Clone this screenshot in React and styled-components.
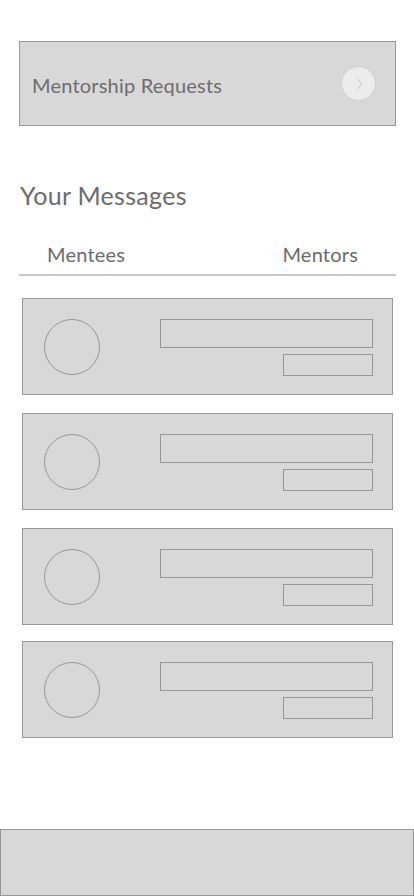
import React from "react";
import styled, { createGlobalStyle } from "styled-components";

const Global = createGlobalStyle`
  html, body { margin: 0; padding: 0; background: #ffffff; }
  body { font-family: Lato, "Noto Sans", "Liberation Sans", sans-serif; }
  * { box-sizing: border-box; }
`;

const Page = styled.div`
  min-height: 896px;
  display: flex;
  flex-direction: column;
`;

const Content = styled.main`
  padding: 41px 18px 0 19px;
  display: flex;
  flex-direction: column;
`;

const RequestCard = styled.div`
  height: 85px;
  background: #d8d8d8;
  border: 1px solid #979797;
  display: flex;
  align-items: center;
  justify-content: space-between;
  padding: 0 19px 0 12px;
`;

const RequestLabel = styled.span`
  font-size: 20px;
  color: #6d6d6d;
  letter-spacing: 0.2px;
  padding-top: 2px;
`;

const ArrowButton = styled.div`
  width: 35px;
  height: 35px;
  border-radius: 50%;
  background: #ececec;
  border: 1px solid #cfcfcf;
  display: flex;
  align-items: center;
  justify-content: center;
`;

const Heading = styled.h2`
  margin: 54px 0 0 1px;
  font-size: 25px;
  font-weight: 400;
  line-height: 30px;
  color: #6b6b6b;
  letter-spacing: 0.3px;
`;

const Tabs = styled.div`
  margin-top: 32px;
  display: flex;
  justify-content: space-between;
  padding: 0 38px 8px 28px;
  border-bottom: 2px solid #c8c8c8;
`;

const Tab = styled.span`
  font-size: 20px;
  line-height: 24px;
  color: #6b6b6b;
  letter-spacing: 0.2px;
`;

const List = styled.div`
  margin: 22px 3px 0 3px;
  display: flex;
  flex-direction: column;
  gap: 18px;
`;

const MessageCard = styled.div`
  height: 97px;
  background: #d8d8d8;
  border: 1px solid #979797;
  display: flex;
  align-items: flex-start;
  justify-content: space-between;
  padding: 20px 19px 0 21px;
  margin-top: ${(p) => (p.$tight ? "-2px" : "0")};
`;

const Avatar = styled.div`
  width: 56px;
  height: 56px;
  border-radius: 50%;
  border: 1px solid #979797;
`;

const Lines = styled.div`
  display: flex;
  flex-direction: column;
  align-items: flex-end;
  gap: 6px;
`;

const LinePlaceholder = styled.div`
  width: ${(p) => p.$w}px;
  height: ${(p) => p.$h}px;
  border: 1px solid #979797;
`;

const BottomBar = styled.nav`
  margin-top: auto;
  height: 67px;
  background: #d8d8d8;
  border: 1px solid #979797;
`;

function Chevron() {
  return (
    <svg width="10" height="14" viewBox="0 0 10 14" fill="none">
      <path d="M3 1.5 L8 7 L3 12.5" stroke="#c4c4c4" strokeWidth="1" />
    </svg>
  );
}

export default function App() {
  return (
    <Page>
      <Global />
      <Content>
        <RequestCard>
          <RequestLabel>Mentorship Requests</RequestLabel>
          <ArrowButton>
            <Chevron />
          </ArrowButton>
        </RequestCard>
        <Heading>Your Messages</Heading>
        <Tabs>
          <Tab>Mentees</Tab>
          <Tab>Mentors</Tab>
        </Tabs>
        <List>
          {[0, 1, 2, 3].map((i) => (
            <MessageCard key={i} $tight={i === 3}>
              <Avatar />
              <Lines>
                <LinePlaceholder $w={213} $h={29} />
                <LinePlaceholder $w={90} $h={22} />
              </Lines>
            </MessageCard>
          ))}
        </List>
      </Content>
      <BottomBar />
    </Page>
  );
}
